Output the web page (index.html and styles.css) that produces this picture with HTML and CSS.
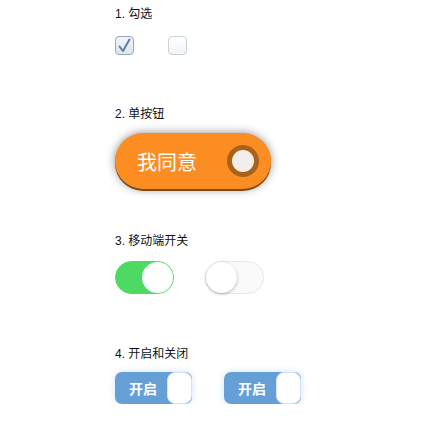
FILE: index.html
```html
<!DOCTYPE html>
<html lang="zh">
<head>
  <meta charset="UTF-8">
  <title>表单控件</title>
  <link rel="stylesheet" href="styles.css">
</head>
<body>
  <div class="page">
    <!-- 1. 勾选 -->
    <section class="group group-check">
      <p class="label">1. 勾选</p>
      <div class="row">
        <span class="checkbox checked">
          <svg width="19" height="19" viewBox="0 0 19 19"><path d="M4.5 10.5 L8 15 L14.5 3.5" fill="none" stroke="#5b7eac" stroke-width="2" stroke-linecap="round" stroke-linejoin="round"/></svg>
        </span>
        <span class="checkbox"></span>
      </div>
    </section>

    <!-- 2. 单按钮 -->
    <section class="group group-button">
      <p class="label">2. 单按钮</p>
      <div class="agree">
        <span class="agree-text">我同意</span>
        <span class="agree-ring"><span class="agree-dot"></span></span>
      </div>
    </section>

    <!-- 3. 移动端开关 -->
    <section class="group group-switch">
      <p class="label">3. 移动端开关</p>
      <div class="row">
        <span class="switch on"><span class="knob"></span></span>
        <span class="switch"><span class="knob"></span></span>
      </div>
    </section>

    <!-- 4. 开启和关闭 -->
    <section class="group group-toggle">
      <p class="label">4. 开启和关闭</p>
      <div class="row">
        <span class="toggle"><span class="toggle-text">开启</span><span class="toggle-knob"></span></span>
        <span class="toggle"><span class="toggle-text">开启</span><span class="toggle-knob"></span></span>
      </div>
    </section>
  </div>
</body>
</html>
```

FILE: styles.css
```css
body {
  margin: 0;
  background-color: #ffffff;
  font-family: Arial, "Noto Sans CJK SC", sans-serif;
  color: #111;
}

.page {
  padding: 4px 0 0 115px;
}

.label {
  margin: 0 0 12px;
  font-size: 12px;
  line-height: 20px;
}

.row {
  display: flex;
  align-items: center;
}

.group-check {
  margin-bottom: 49px;
}

.group-button {
  margin-bottom: 42px;
}

.group-button .label {
  margin-bottom: 9px;
}

.group-switch {
  margin-bottom: 50px;
}

.group-switch .label {
  margin-bottom: 10px;
}

.group-toggle .label {
  margin-bottom: 8px;
}

/* checkbox */
.checkbox {
  box-sizing: border-box;
  width: 19px;
  height: 19px;
  border: 1px solid #c9d1d9;
  border-radius: 4px;
  background: linear-gradient(#ffffff, #f1f3f5);
  margin-right: 34px;
  display: flex;
}

.checkbox.checked {
  border-color: #98a6b8;
  background: linear-gradient(#f2f5f8, #dfe5ec);
}

.checkbox svg {
  margin: -1px;
}

/* single button */
.agree {
  box-sizing: border-box;
  width: 156px;
  height: 56px;
  border-radius: 28px;
  background-color: #fc8d22;
  display: flex;
  align-items: center;
  justify-content: space-between;
  padding: 0 12px 0 22px;
  box-shadow: 0 2px 0 #7c4d16, 0 0 10px rgba(0, 0, 0, 0.45);
}

.agree-text {
  color: #fff;
  font-size: 20px;
  font-family: "Noto Sans CJK SC", sans-serif;
}

.agree-ring {
  width: 32px;
  height: 32px;
  border-radius: 50%;
  background-color: #a9621a;
  display: flex;
  align-items: center;
  justify-content: center;
}

.agree-dot {
  width: 22px;
  height: 22px;
  border-radius: 50%;
  background-color: #f5eee8;
}

/* mobile switch */
.switch {
  box-sizing: border-box;
  width: 59px;
  height: 33px;
  border-radius: 17px;
  border: 1px solid #e8e8e8;
  background-color: #fafafa;
  margin-right: 31px;
  position: relative;
}

.switch .knob {
  position: absolute;
  top: 0;
  left: 0;
  width: 31px;
  height: 31px;
  border-radius: 50%;
  background-color: #fff;
  box-shadow: 0 1px 3px rgba(0, 0, 0, 0.3);
}

.switch.on {
  background-color: #4cd964;
  border-color: #4cd964;
}

.switch.on .knob {
  left: auto;
  right: 0;
  box-shadow: none;
}

/* on / off */
.toggle {
  box-sizing: border-box;
  width: 77px;
  height: 32px;
  border-radius: 7px;
  background-color: #659fd6;
  display: flex;
  align-items: stretch;
  justify-content: space-between;
  margin-right: 32px;
  box-shadow: 0 0 6px rgba(120, 170, 230, 0.35);
}

.toggle-text {
  color: #fff;
  font-weight: bold;
  font-size: 14px;
  line-height: 32px;
  padding-left: 14px;
  font-family: "Noto Sans CJK SC", sans-serif;
}

.toggle-knob {
  width: 25px;
  border-radius: 8px;
  background-color: #fff;
  border: 1px solid #d5e2f0;
  box-sizing: border-box;
}
```
